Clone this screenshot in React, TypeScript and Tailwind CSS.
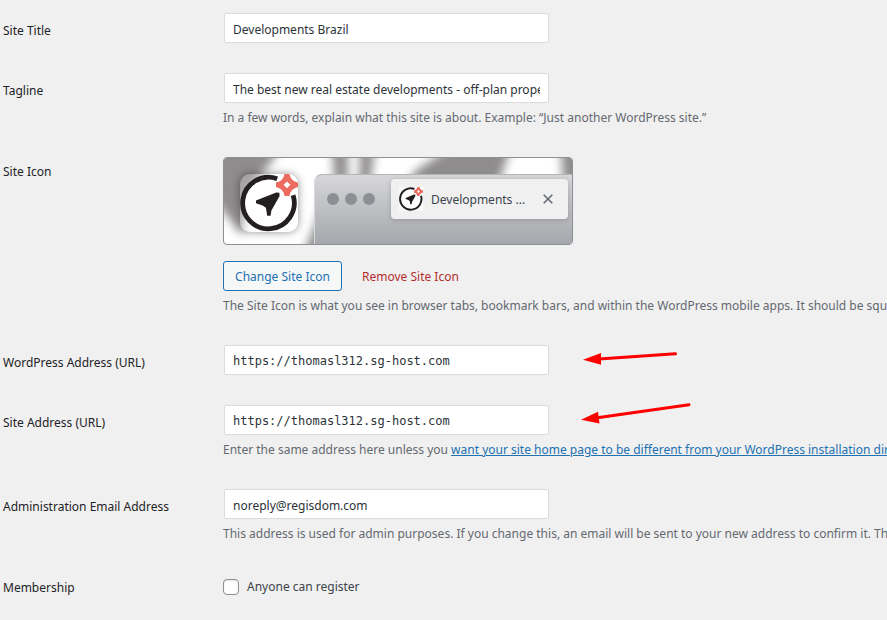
import type { ReactNode } from "react";

function SiteLogo({ className }: { className: string }) {
  return (
    <svg viewBox="0 0 58 58" className={className} aria-hidden="true">
      <circle cx="28.5" cy="29" r="26" fill="#ffffff" />
      <path d="M38 0H58V22H52Z" fill="#ffffff" />
      <path
        d="M37.2 4.7A25.8 25.8 0 1 0 53.1 21.3"
        fill="none"
        stroke="#231f20"
        strokeWidth="4.8"
      />
      <path
        d="M16 26.6 36.2 18.4 39.4 18.8 39.6 22 31.4 36.4 30.6 41.8 27.2 41.8 25.9 33.8 22.6 31.4 16 29.2Z"
        fill="#231f20"
      />
      <path
        fillRule="evenodd"
        d="M44.5 0H49.5Q50.5 7 58 8.5V13Q50.5 14.5 49.5 22H44.5Q43.5 14.5 36 13V8.5Q43.5 7 44.5 0ZM47 7.4 43.6 10.8 47 14.2 50.4 10.8Z"
        fill="#ec6a5e"
      />
    </svg>
  );
}

function IconPreview() {
  return (
    <div className="relative flex h-[88px] w-[350px] overflow-hidden rounded-sm border border-[#8c8f94] bg-white">
      <svg
        viewBox="0 0 348 86"
        className="absolute inset-0 h-full w-full"
        aria-hidden="true"
      >
        <defs>
          <filter id="soft" x="-20%" y="-50%" width="140%" height="200%">
            <feGaussianBlur stdDeviation="5" />
          </filter>
        </defs>
        <g filter="url(#soft)" fill="#8f8c8d">
          <path d="M-20-20H62Q48 6 28 28 20 50 18 78L8 64-20 30Z" />
          <path d="M107-20H124V30H111Z" />
          <path d="M136-20H152L146 30H135Z" />
          <path d="M190 14 216-4 240-20H290L272 34H180Z" />
          <path d="M336-20H370V40H340Z" />
          <path d="M100 36 92 64 78 100H120V36Z" />
        </g>
      </svg>
      <div className="relative mt-4 ml-4 h-[58px] w-[58px] shrink-0 overflow-hidden rounded-[10px] bg-white/20 shadow-[0_0_8px_#00000070]">
        <SiteLogo className="h-full w-full" />
      </div>
      <div className="relative mt-4 ml-4 flex flex-1 items-start rounded-tl-lg border-t border-l border-t-[#b3b4b8] border-l-[#d8d9db] bg-linear-to-b from-[#d7d7da] to-[#a4a7ab] pt-1 pr-1 pl-3">
        <div className="mt-[14px] flex shrink-0 gap-[6px]">
          <span className="h-3 w-3 rounded-full bg-[#8c8f94]" />
          <span className="h-3 w-3 rounded-full bg-[#8c8f94]" />
          <span className="h-3 w-3 rounded-full bg-[#8c8f94]" />
        </div>
        <div className="ml-4 flex h-10 min-w-0 flex-1 items-center rounded bg-[#f0f0f1] pl-2 shadow-[0_1px_5px_#00000030]">
          <SiteLogo className="h-6 w-6 shrink-0 bg-white/60" />
          <span className="ml-2 w-[100px] shrink-0 pt-0.5 whitespace-nowrap text-[#3c434a]">
            Developments ...
          </span>
          <svg
            viewBox="0 0 10 10"
            className="ml-3 h-[10px] w-[10px] shrink-0"
            aria-hidden="true"
          >
            <path d="M.7.7 9.3 9.3M9.3.7.7 9.3" stroke="#646970" strokeWidth="1.6" />
          </svg>
        </div>
      </div>
    </div>
  );
}

function Row({
  label,
  htmlFor,
  compact = false,
  children,
}: {
  label: string;
  htmlFor?: string;
  compact?: boolean;
  children: ReactNode;
}) {
  const pad = compact ? "pt-1" : "pt-[7px]";
  return (
    <div className="grid grid-cols-[220px_minmax(0,1fr)]">
      <div className={`${pad} text-[#1d2327]`}>
        {htmlFor ? <label htmlFor={htmlFor}>{label}</label> : <span>{label}</span>}
      </div>
      <div className="min-w-0">{children}</div>
    </div>
  );
}

function Field({
  id,
  value,
  type = "text",
  code = false,
}: {
  id: string;
  value: string;
  type?: string;
  code?: boolean;
}) {
  const font = code ? "pt-px font-['DejaVu_Sans_Mono',monospace]" : "pt-0.5";
  return (
    <input
      id={id}
      type={type}
      defaultValue={value}
      className={`mx-px block h-[30px] w-[325px] rounded-xs border border-[#dcdcde] bg-white px-2 text-[12px] text-[#2c3338] outline-none focus:border-[#2271b1] ${font}`}
    />
  );
}

function Help({ children }: { children: ReactNode }) {
  return <p className="mt-1 -mb-0.5 whitespace-nowrap text-[#646970]">{children}</p>;
}

export default function App() {
  return (
    <main className="relative min-h-screen overflow-hidden bg-[#f0f0f0] pt-[13px] pb-4 pl-[3px] font-['Noto_Sans',sans-serif] text-[12px] leading-[22px]">
      <form className="flex flex-col gap-[30px]">
        <Row label="Site Title" htmlFor="title">
          <Field id="title" value="Developments Brazil" />
        </Row>
        <Row label="Tagline" htmlFor="tagline">
          <Field
            id="tagline"
            value="The best new real estate developments - off-plan properties in Brazil"
          />
          <Help>
            In a few words, explain what this site is about. Example: “Just another
            WordPress site.”
          </Help>
        </Row>
        <Row label="Site Icon" compact>
          <IconPreview />
          <div className="mt-4 flex gap-[10px]">
            <button
              type="button"
              className="h-[30px] w-[119px] rounded-[3px] border border-[#2271b1] bg-[#f6f7f7] pt-0.5 whitespace-nowrap text-[#2271b1]"
            >
              Change Site Icon
            </button>
            <button
              type="button"
              className="h-[30px] px-[10px] pt-0.5 whitespace-nowrap text-[#b32d2e]"
            >
              Remove Site Icon
            </button>
          </div>
          <Help>
            The Site Icon is what you see in browser tabs, bookmark bars, and within the
            WordPress mobile apps. It should be square.
          </Help>
        </Row>
        <Row label="WordPress Address (URL)" htmlFor="siteurl">
          <Field id="siteurl" type="url" value="https://thomasl312.sg-host.com" code />
        </Row>
        <Row label="Site Address (URL)" htmlFor="home">
          <Field id="home" type="url" value="https://thomasl312.sg-host.com" code />
          <Help>
            Enter the same address here unless you{" "}
            <a href="#home" className="text-[#2271b1] underline">
              want your site home page to be different from your WordPress installation
              directory
            </a>
            .
          </Help>
        </Row>
        <Row label="Administration Email Address" htmlFor="email">
          <Field id="email" type="email" value="noreply@regisdom.com" />
          <Help>
            This address is used for admin purposes. If you change this, an email will be
            sent to your new address to confirm it. The new address will not become active
            until confirmed.
          </Help>
        </Row>
        <Row label="Membership" compact>
          <label className="flex h-7 items-center gap-2 text-[#3c434a]">
            <input
              type="checkbox"
              className="h-4 w-4 appearance-none rounded border border-[#8c8f94] bg-white shadow-[inset_0_1px_2px_#0000001a] checked:bg-[#2271b1]"
            />
            Anyone can register
          </label>
        </Row>
      </form>
      <svg
        viewBox="0 0 110 76"
        className="pointer-events-none absolute top-[350px] left-[581px] h-[76px] w-[110px]"
        aria-hidden="true"
      >
        <g stroke="#ff0000" strokeWidth="3" strokeLinecap="round" fill="#ff0000">
          <path d="M18 9 94.5 3.8" />
          <path d="M18 67.5 108 54.8" />
          <path stroke="none" d="M2 9.8 20 3V14.8ZM0 69.8 17 61.8 18.5 73.6Z" />
        </g>
      </svg>
    </main>
  );
}
